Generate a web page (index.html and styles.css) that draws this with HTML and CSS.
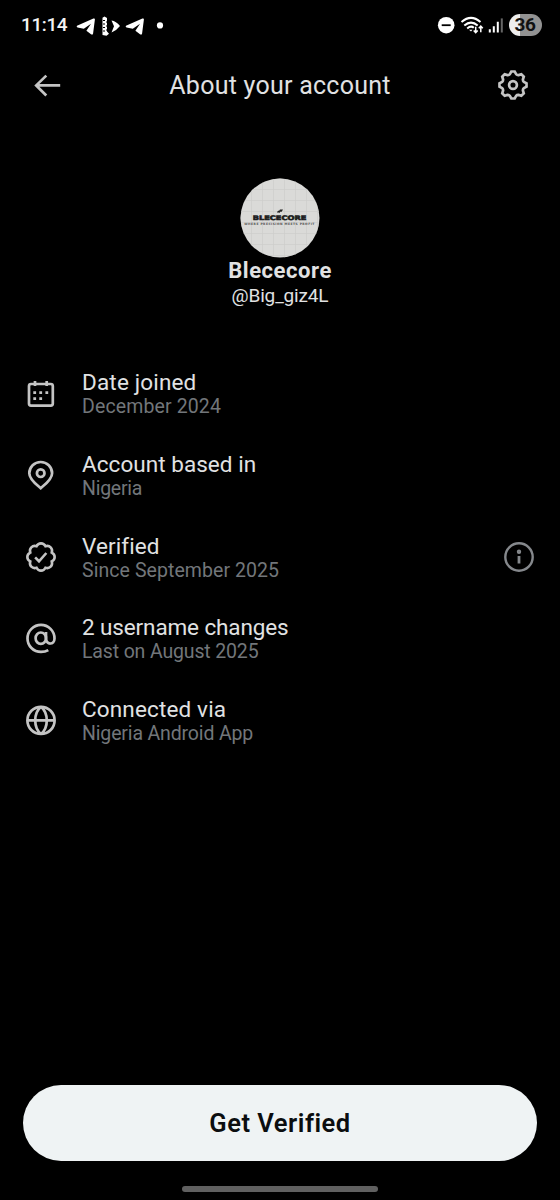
FILE: index.html
```html
<!DOCTYPE html>
<html lang="en">
<head>
<meta charset="utf-8">
<meta name="viewport" content="width=device-width, initial-scale=1">
<title>About your account</title>
<link rel="stylesheet" href="styles.css">
</head>
<body>
<div class="screen">
  <div class="status">
    <span class="time">11:14</span>
    <svg class="notifications" viewBox="0 0 92 24" width="92" height="24" fill="#fff">
      <path d="M1 12.7 17.4 5.6Q19 5 18.9 6.6L17.1 20.6Q16.7 22.3 15 21.2L10.4 17.7 15 10.8 7.8 15.7 1.6 14.4Q0 13.7 1 12.7Z"/>
      <path d="M26.5 4.8 28.5 3.5 31 5V18.5L33 20.8 30.5 22.8 26.5 22Z"/>
      <path d="M27 7.5h2M27 11h2M27 14.5h2M27 18h2M30 9h1M30 13h1M30 17h1" stroke="#000" stroke-width="1"/>
      <path d="M35.5 7.5Q40 8 44 13Q40.5 17.5 35.5 19.5L38 13.2Z"/>
      <path d="M50 12.7 66.4 5.6Q68 5 67.9 6.6L66.1 20.6Q65.7 22.3 64 21.2L59.4 17.7 64 10.8 56.8 15.7 50.6 14.4Q49 13.7 50 12.7Z"/>
      <circle cx="84" cy="12.4" r="3.1"/>
    </svg>
    <svg class="signals" viewBox="0 0 68 24" width="68" height="24" fill="none" stroke="#fff">
      <circle cx="9.2" cy="12.2" r="8.3" fill="#fff" stroke="none"/>
      <path d="M4.7 12.2h9" stroke="#000" stroke-width="1.8"/>
      <path d="M24.5 9Q34 .8 43.5 9M27.3 12.5Q34 6.7 40.7 12.5M30.2 15.4Q34 12.2 36.8 14.8" stroke-width="2"/>
      <path d="M32 16.7h3.5L34 18.4Z" fill="#fff" stroke="none"/>
      <path d="M38.7 13.7v6M36.7 17.5l2 2.1 2-2.1M43.8 19.2v-6M41.8 15.3l2-2.1 2 2.1" stroke-width="1.5"/>
      <path d="M52.8 16.2v3.3M56.8 13.2v6.3M60.8 8.7v10.8" stroke-width="2"/>
      <path d="M64.8 5.4v14.1" stroke="#666" stroke-width="2"/>
    </svg>
    <span class="battery">36</span>
  </div>

  <header class="header">
    <svg viewBox="0 0 28 28" width="28" height="28" class="icon"><path d="M27.2 14.4H3.2M13.3 4.6 3.2 14.4 13.3 24.5"/></svg>
    <h1 class="title">About your account</h1>
    <svg viewBox="-16 -16 32 32" width="32" height="32" class="icon gear"><path d="M-1.7-13.5H1.7L3.1-10.9Q4.06-9.79 5.51-9.9L8.34-10.75 10.75-8.34 9.9-5.51Q9.79-4.06 10.9-3.1L13.5-1.7V1.7L10.9 3.1Q9.79 4.06 9.9 5.51L10.75 8.34 8.34 10.75 5.51 9.9Q4.06 9.79 3.1 10.9L1.7 13.5H-1.7L-3.1 10.9Q-4.06 9.79-5.51 9.9L-8.34 10.75-10.75 8.34-9.9 5.51Q-9.79 4.06-10.9 3.1L-13.5 1.7V-1.7L-10.9-3.1Q-9.79-4.06-9.9-5.51L-10.75-8.34-8.34-10.75-5.51-9.9Q-4.06-9.79-3.1-10.9Z"/><circle r="3.9"/></svg>
  </header>

  <section class="profile">
    <svg class="avatar" viewBox="0 0 80 80" width="80" height="80">
      <defs>
        <clipPath id="disc"><circle cx="40" cy="40" r="39.5"/></clipPath>
        <pattern id="grid" width="11" height="11" patternUnits="userSpaceOnUse"><path d="M0 .5h11M.5 0v11" stroke="#cdcdcb" stroke-width=".7"/></pattern>
      </defs>
      <g clip-path="url(#disc)">
        <rect width="80" height="80" fill="#dadad8"/>
        <rect width="80" height="80" fill="url(#grid)"/>
        <path d="M36.8 34.6 38 32.8h1.2l.8-1.2h3l-1.3 2.2h-1.6l-.7 1.2h-1l.6-1-1 .6Z" fill="#222"/>
        <text x="12.8" y="41.6" textLength="53.5" lengthAdjust="spacingAndGlyphs" class="logo">BLECECORE</text>
        <text x="4.3" y="47.4" textLength="70" class="motto">WHERE PRECISION MEETS PROFIT</text>
      </g>
    </svg>
    <div class="name">Blececore</div>
    <div class="handle">@Big_giz4L</div>
  </section>

  <ul class="facts">
    <li class="fact">
      <svg viewBox="0 0 32 32" width="32" height="32" class="icon"><rect x="4" y="6" width="23.8" height="21.6" rx="2"/><path d="M10 3.1v5M21.7 3.1v5"/><path d="M8.3 14.7h2.8M14.3 14.7h2.8M20.4 14.7h2.8M8.3 20.6h2.8M14.3 20.6h2.8"/></svg>
      <div class="copy"><div class="label l1">Date joined</div><div class="value v1">December 2024</div></div>
    </li>
    <li class="fact">
      <svg viewBox="0 0 32 32" width="32" height="32" class="icon"><path d="M15.7 29.2C12 25.9 4.3 20.6 4.3 14.2A11.4 11.2 0 0 1 27.1 14.2C27.1 20.6 19.4 25.9 15.7 29.2Z"/><circle cx="15.7" cy="14.2" r="3.8"/></svg>
      <div class="copy"><div class="label l2">Account based in</div><div class="value v2">Nigeria</div></div>
    </li>
    <li class="fact">
      <svg viewBox="0 0 24 24" width="32" height="32" class="icon badge"><path d="M22.25 12c0-1.43-.88-2.67-2.19-3.34.46-1.39.2-2.9-.81-3.91s-2.52-1.27-3.91-.81c-.66-1.31-1.91-2.19-3.34-2.19s-2.67.88-3.33 2.19c-1.4-.46-2.91-.2-3.92.81s-1.26 2.52-.8 3.91c-1.31.67-2.2 1.91-2.2 3.34s.89 2.67 2.2 3.34c-.46 1.39-.21 2.9.8 3.91s2.52 1.26 3.91.81c.67 1.31 1.91 2.19 3.34 2.19s2.68-.88 3.34-2.19c1.39.45 2.9.2 3.91-.81s1.27-2.52.81-3.91c1.31-.67 2.19-1.91 2.19-3.34z"/><path d="m7.6 12.3 2.9 2.9 5.5-6.2"/></svg>
      <div class="copy"><div class="label l3">Verified</div><div class="value v3">Since September 2025</div></div>
      <svg viewBox="0 0 32 32" width="32" height="32" class="icon info"><circle cx="16" cy="16" r="13.7"/><path d="M16 15v7.5" stroke-width="2.8"/><circle cx="16" cy="10.8" r="1" /></svg>
    </li>
    <li class="fact">
      <svg viewBox="0 0 32 32" width="32" height="32" class="icon"><ellipse cx="15.8" cy="16.2" rx="5.2" ry="5.7"/><path d="M21 9.9V16.6C21 23.2 29.5 23.2 29.5 16.4A13.5 13.5 0 1 0 16 29.9Q20.2 29.9 23.3 28.1"/></svg>
      <div class="copy"><div class="label l4">2 username changes</div><div class="value v4">Last on August 2025</div></div>
    </li>
    <li class="fact">
      <svg viewBox="0 0 32 32" width="32" height="32" class="icon"><circle cx="16" cy="16.4" r="13.6"/><path d="M2.4 16.4h27.2M16 2.8C8.3 9.4 8.3 23.4 16 30M16 2.8C23.7 9.4 23.7 23.4 16 30"/></svg>
      <div class="copy"><div class="label l5">Connected via</div><div class="value v5">Nigeria Android App</div></div>
    </li>
  </ul>

  <footer class="footer">
    <button class="cta">Get Verified</button>
    <div class="home"></div>
  </footer>
</div>
</body>
</html>
```
FILE: styles.css
```css
* { box-sizing: border-box; }
body { margin: 0; background: #000; font-family: Roboto, "Liberation Sans", sans-serif; }
.screen { width: 560px; height: 1200px; display: flex; flex-direction: column; background: #000; color: #e1e2e3; overflow: hidden; }
.status { height: 50px; padding: 0 18.5px 0 21px; display: flex; align-items: center; }
.time { width: 47px; font-size: 19px; font-weight: 500; letter-spacing: -.4px; color: #f4f4f4; line-height: 22px; white-space: nowrap; }
.notifications { margin-left: 8px; }
.signals { margin-left: auto; }
.battery { width: 33px; height: 22px; margin-left: 4px; border-radius: 11px; background: linear-gradient(90deg, #eee 11px, #929292 11px); color: #111; font-size: 19px; font-weight: 700; line-height: 22px; letter-spacing: -.5px; text-align: center; }
.header { height: 70px; padding: 0 31px 0 33px; display: flex; align-items: center; justify-content: space-between; }
.icon { fill: none; stroke: #c4c4c4; stroke-width: 2.7; flex: none; }
.badge { stroke-width: 1.95; }
.title { margin: 2px 0 0 2px; font-size: 25px; font-weight: 400; line-height: 28px; letter-spacing: .25px; }
.profile { height: 232.8px; padding-top: 58px; display: flex; flex-direction: column; align-items: center; }
.avatar { flex: none; }
.logo { font: 700 6.2px "DejaVu Sans", sans-serif; fill: #1c1c1c; stroke: #1c1c1c; stroke-width: .6; }
.motto { font: 700 3px "DejaVu Sans", sans-serif; fill: #555; }
.name { font-size: 22px; font-weight: 700; line-height: 26px; letter-spacing: .55px; }
.handle { font-size: 19px; line-height: 24px; letter-spacing: -.15px; }
.facts { margin: 0; padding: 0; list-style: none; }
.fact { height: 81.6px; padding: 0 25px; display: flex; align-items: center; }
.copy { margin-left: 25px; padding-top: .6px; flex: 1; }
.label { font-size: 22.5px; line-height: 26px; }
.value { padding-top: 1px; font-size: 19.5px; line-height: 22px; color: #72767a; }
.l1 { letter-spacing: .17px; }
.l2 { letter-spacing: .05px; }
.l3 { letter-spacing: .1px; }
.l4 { letter-spacing: -.12px; }
.l5 { letter-spacing: .15px; }
.v1 { letter-spacing: .13px; }
.v2 { letter-spacing: -.25px; }
.v3 { letter-spacing: .07px; }
.v4, .v5 { letter-spacing: -.15px; }
.info { stroke: #85888c; stroke-width: 2.4; }
.footer { margin-top: auto; height: 115.5px; display: flex; flex-direction: column; align-items: center; }
.cta { width: 514px; height: 76px; padding: 1px 0 0; border: 0; border-radius: 38px; background: #eff3f4; color: #0b0d0f; font: 600 25.5px/28px Roboto, sans-serif; letter-spacing: .5px; }
.home { width: 196px; height: 6px; margin-top: 25.5px; border-radius: 3px; background: #606060; }
```
